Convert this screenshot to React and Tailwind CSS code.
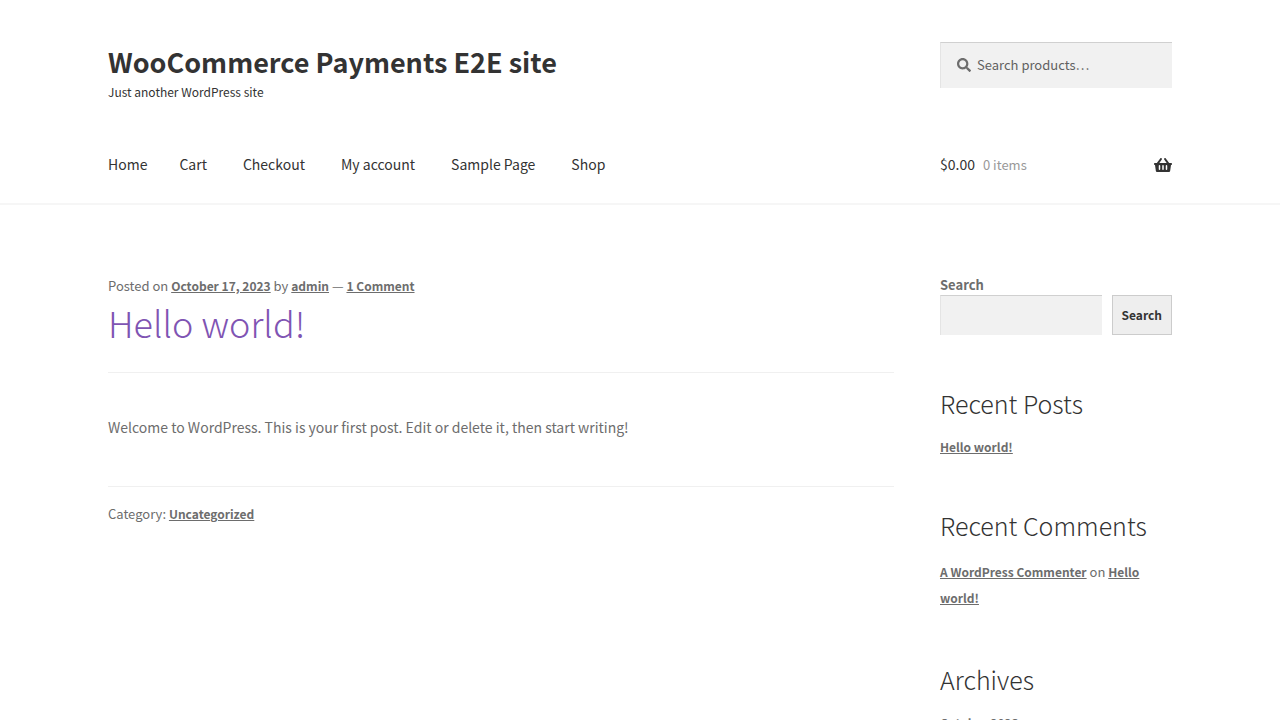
import { FaSearch, FaShoppingBasket } from "react-icons/fa";

const navItems = ["Home", "Cart", "Checkout", "My account", "Sample Page", "Shop"];

function TextLink({ children }) {
  return (
    <a href="#" className="text-[12px] font-bold underline">
      {children}
    </a>
  );
}

function Widget({ title, children }) {
  return (
    <section className="mt-[52px] text-[13px]">
      <h2 className="mb-[18px] text-[25px] leading-8 font-light text-[#333333]">{title}</h2>
      {children}
    </section>
  );
}

function Header() {
  return (
    <header className="border-b-2 border-[#f6f6f6] pt-[42px] text-[#333333]">
      <div className="mx-auto grid max-w-[1064px] grid-cols-[minmax(0,1fr)_232px] gap-x-[46px]">
        <div className="h-[84px]">
          <a href="#" className="block text-[27px] leading-10 font-bold">
            WooCommerce Payments E2E site
          </a>
          <p className="text-[12px] leading-5">Just another WordPress site</p>
        </div>
        <form className="relative">
          <FaSearch className="absolute top-4 left-[17px] size-[14px] text-[#6d6d6d]" />
          <input
            aria-label="Search products"
            type="search"
            placeholder="Search products…"
            className="h-[46px] w-full border-t border-l border-t-[#d0d0d0] border-l-[#e4e4e4] bg-[#f1f1f1] pb-0.5 pl-9 text-[13px] text-[#43454b] outline-none placeholder:text-[#616161]"
          />
        </form>
        <nav className="flex h-[77px] items-center gap-9 text-[14px]">
          {navItems.map((item) => (
            <a key={item} href="#" className="first:-mr-1">
              {item}
            </a>
          ))}
        </nav>
        <a href="#" className="flex h-[77px] items-center text-[14px]">
          <span>$0.00</span>
          <span className="ml-2 text-[13px] text-[#999999]">0 items</span>
          <FaShoppingBasket className="ml-auto size-[18px]" />
        </a>
      </div>
    </header>
  );
}

function Post() {
  return (
    <article>
      <header className="border-b border-[#f0f0f0] pb-[26px]">
        <p className="text-[13px] leading-5">
          Posted on <TextLink>October 17, 2023</TextLink> by <TextLink>admin</TextLink> — <TextLink>1 Comment</TextLink>
        </p>
        <h1 className="mt-0.5 text-[36px] leading-12 font-light text-[#7f54b3]">
          <a href="#">Hello world!</a>
        </h1>
      </header>
      <p className="pt-[41px] pb-[46px] text-[14px] leading-[26px]">
        Welcome to WordPress. This is your first post. Edit or delete it, then start writing!
      </p>
      <footer className="border-t border-[#f0f0f0] pt-[15px] text-[13px] leading-6">
        Category: <TextLink>Uncategorized</TextLink>
      </footer>
    </article>
  );
}

function Sidebar() {
  return (
    <aside>
      <form>
        <label htmlFor="site-search" className="block pb-px text-[13px] leading-[18px] font-bold">
          Search
        </label>
        <div className="flex gap-[10px]">
          <input
            id="site-search"
            type="search"
            className="h-10 min-w-0 flex-1 border-t border-l border-t-[#d0d0d0] border-l-[#e4e4e4] bg-[#f1f1f1] px-3 text-[13px] outline-none"
          />
          <button type="button" className="border border-[#cccccc] bg-[#eeeeee] px-[9px] text-[12px] font-bold text-[#333333]">
            Search
          </button>
        </div>
      </form>
      <Widget title="Recent Posts">
        <TextLink>Hello world!</TextLink>
      </Widget>
      <Widget title="Recent Comments">
        <p className="leading-[26px]">
          <TextLink>A WordPress Commenter</TextLink> on <TextLink>Hello world!</TextLink>
        </p>
      </Widget>
      <Widget title="Archives">
        <TextLink>October 2023</TextLink>
      </Widget>
    </aside>
  );
}

export default function App() {
  return (
    <div className="min-h-screen bg-white font-['Noto_Sans_CJK_JP','Noto_Sans_CJK_SC',sans-serif] text-[#6d6d6d]">
      <Header />
      <main className="mx-auto grid max-w-[1064px] grid-cols-[minmax(0,1fr)_232px] gap-x-[46px] pt-[71px] pb-14">
        <Post />
        <Sidebar />
      </main>
    </div>
  );
}
